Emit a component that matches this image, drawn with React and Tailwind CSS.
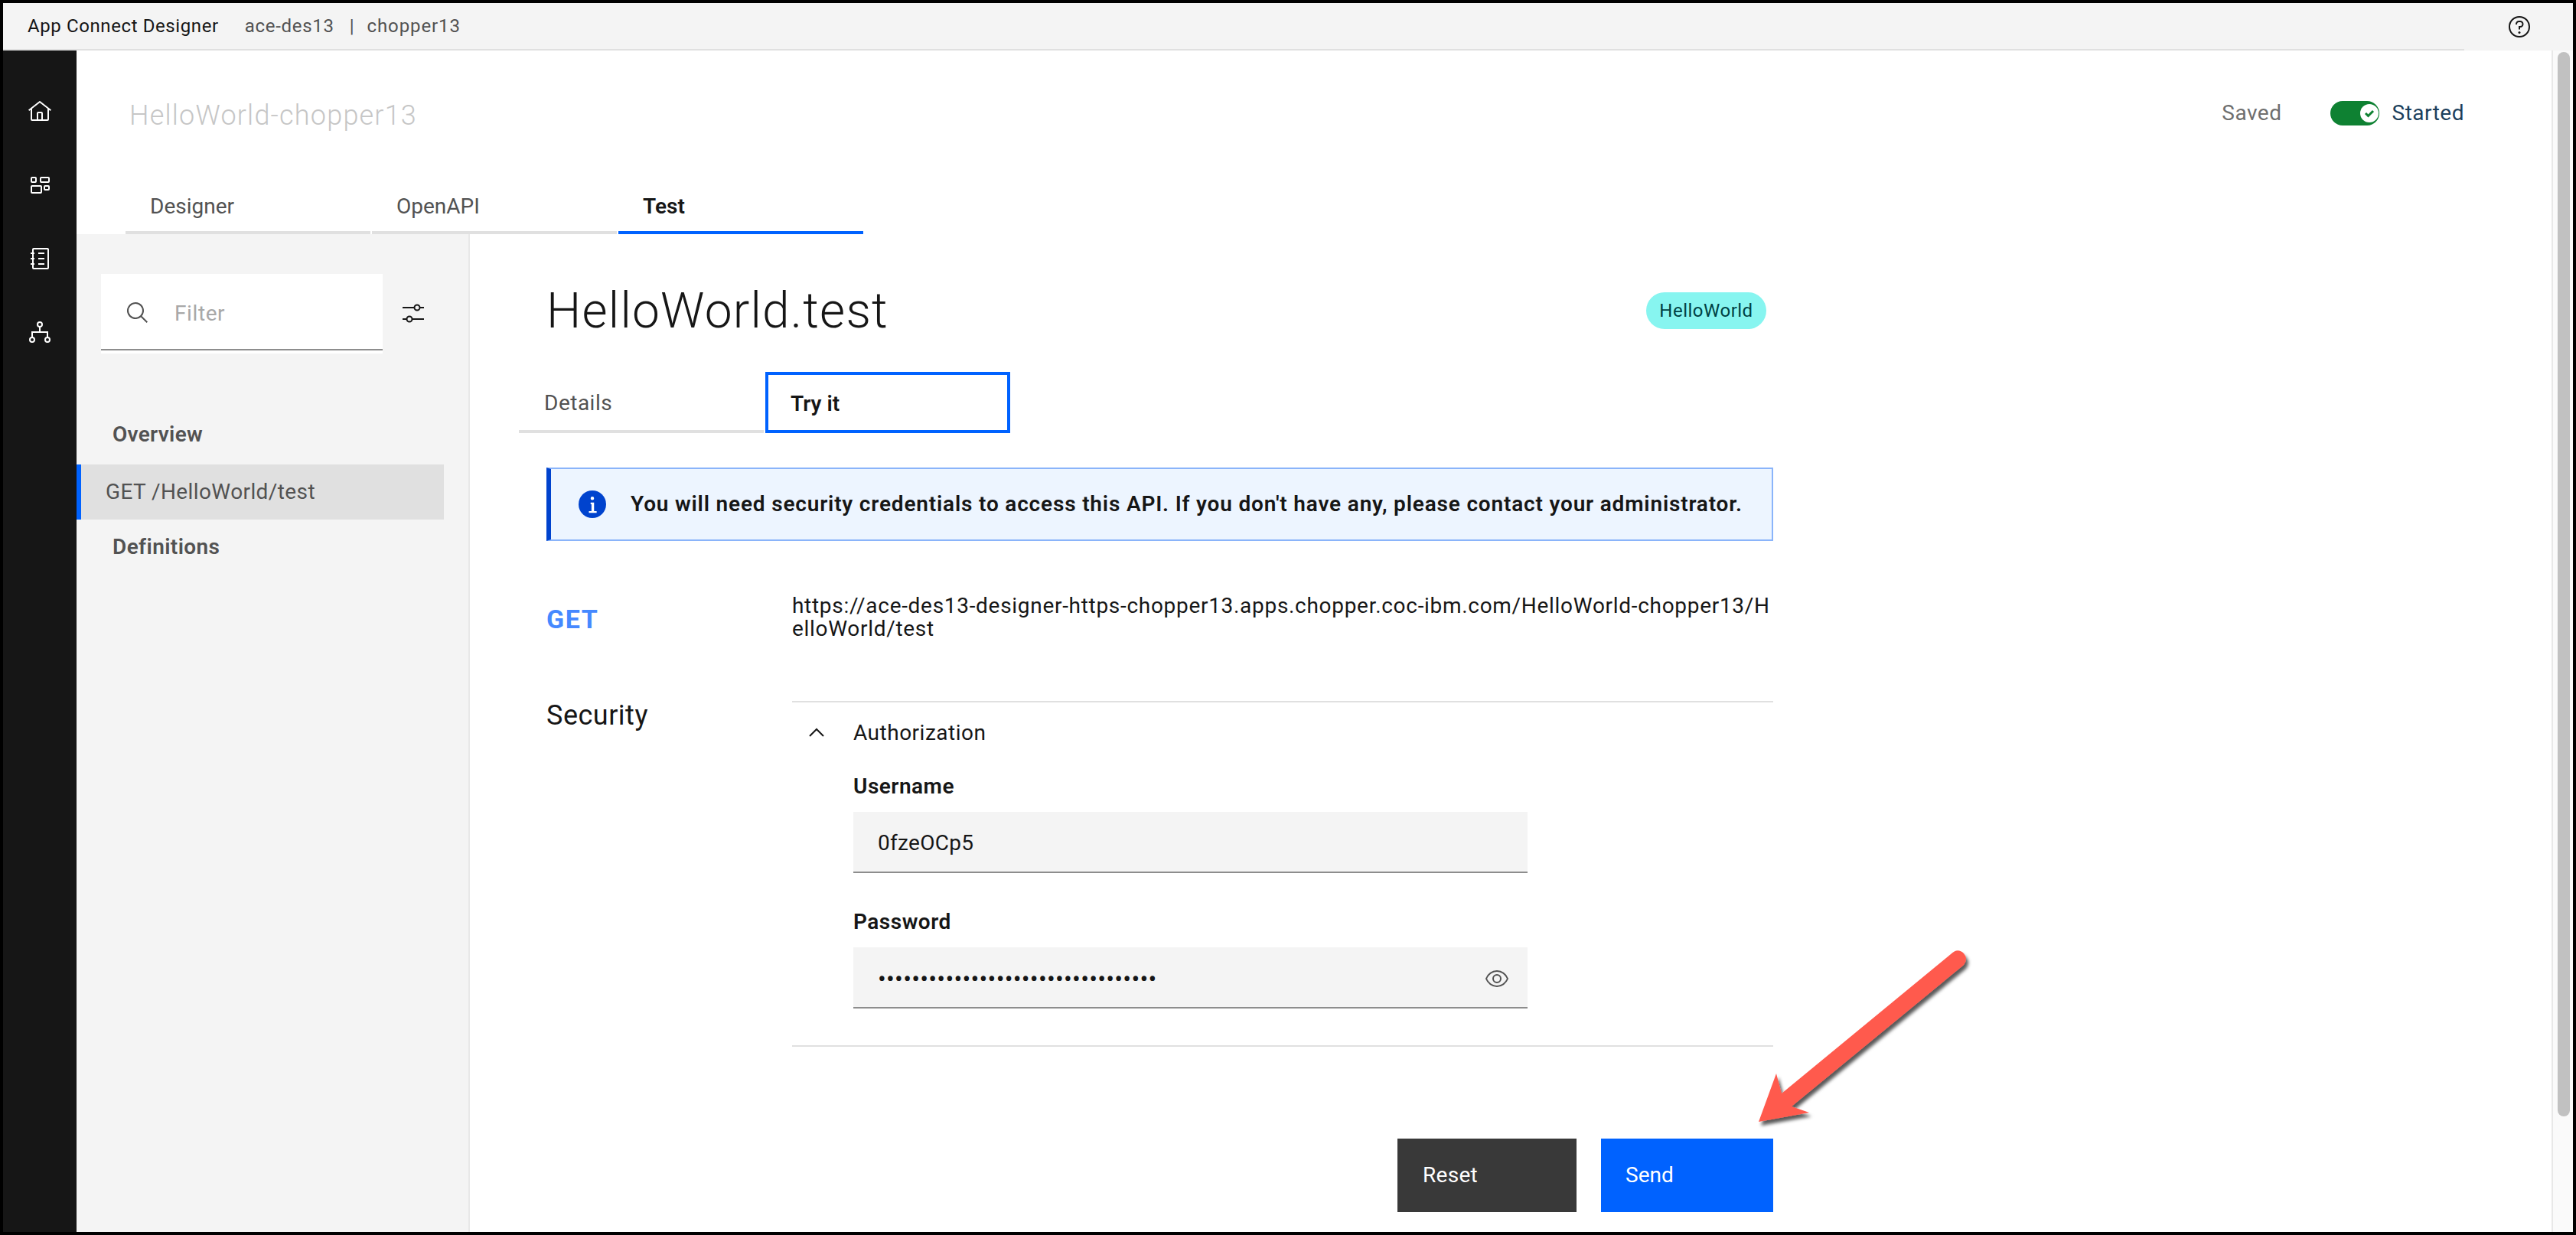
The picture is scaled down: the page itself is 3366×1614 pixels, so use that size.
const plex = { fontFamily: 'Roboto, "Noto Sans", sans-serif' };

function Arrow() {
  return (
    <svg className="absolute left-[2290px] top-[1236px] overflow-visible" width="290" height="240" viewBox="2290 1236 290 240">
      <defs>
        <filter id="arrowShadow" x="-10%" y="-10%" width="130%" height="130%">
          <feDropShadow dx="3" dy="5" stdDeviation="2" floodColor="#000" floodOpacity="0.65" />
        </filter>
      </defs>
      <path
        filter="url(#arrowShadow)"
        fill="#ff5a4d"
        d="M2298 1466 L2321 1403 L2328 1429 L2549 1247 Q2558 1238 2566 1246 Q2572 1253 2566 1261 L2341 1446 L2364 1454 Z"
      />
    </svg>
  );
}

function NavIcons() {
  return (
    <div className="flex flex-col items-center pt-[64px] text-white">
      <svg width="32" height="32" viewBox="0 0 32 32" fill="currentColor">
        <path d="M16.6123,2.2138a1.01,1.01,0,0,0-1.2427,0L1,13.4194l1.2427,1.5717L4,13.6209V26a2.0041,2.0041,0,0,0,2,2H26a2.0037,2.0037,0,0,0,2-2V13.63L29.7573,15,31,13.4282ZM18,26H14V18h4Zm2,0V18a2.0023,2.0023,0,0,0-2-2H14a2.0023,2.0023,0,0,0-2,2v8H6V12.0615l10-7.79,10,7.8005V26Z" />
      </svg>
      <svg className="mt-[69px]" width="25" height="22" viewBox="0 0 25 22" fill="none" stroke="currentColor" strokeWidth="2">
        <rect x="1" y="1" width="6" height="6" rx="1" />
        <rect x="13" y="1" width="11" height="6" rx="1" />
        <rect x="1" y="12" width="13" height="9" rx="1" />
        <rect x="18" y="12" width="6" height="5" rx="1" />
      </svg>
      <svg className="mt-[71px]" width="24" height="28" viewBox="0 0 24 28" fill="none" stroke="currentColor" strokeWidth="2">
        <rect x="3" y="1" width="20" height="26" rx="1" />
        <path d="M0 7h5M0 14h5M0 21h5M10 7h8M10 14h8M10 21h8" />
      </svg>
      <svg className="mt-[68px]" width="28" height="29" viewBox="0 0 28 29" fill="none" stroke="currentColor" strokeWidth="2">
        <circle cx="14" cy="4" r="3" />
        <circle cx="4" cy="24" r="3" />
        <circle cx="24" cy="24" r="3" />
        <path d="M14 7v7M4 21v-7h20v7" />
      </svg>
    </div>
  );
}

function TopTab({ label, active }) {
  return (
    <div
      className={`w-[320px] h-[68px] pl-[32px] pt-[14px] text-[28px] leading-[36px] border-b-4 ${
        active ? 'border-[#0062ff] text-[#161616] font-semibold' : 'border-[#e0e0e0] text-[#525252]'
      }`}
    >
      {label}
    </div>
  );
}

function FilterPanel() {
  return (
    <div className="w-[514px] shrink-0 bg-[#f4f4f4] border-r-2 border-[#e8e8e8] pt-[52px]">
      <div className="flex items-start">
        <div className="ml-[32px] w-[368px] h-[104px] bg-white">
          <div className="h-[100px] border-b-2 border-[#8d8d8d] flex items-center pt-[4px]">
            <svg className="ml-[32px]" width="32" height="32" viewBox="0 0 32 32" fill="#525252">
              <path d="M29,27.5859l-7.5521-7.5521a11.0177,11.0177,0,1,0-1.4141,1.4141L27.5859,29ZM4,13a9,9,0,1,1,9,9A9.01,9.01,0,0,1,4,13Z" />
            </svg>
            <span className="ml-[32px] mt-[2px] text-[28px] text-[#a8a8a8] tracking-[0.6px]">Filter</span>
          </div>
        </div>
        <svg className="ml-[26px] mt-[39px]" width="28" height="25" viewBox="0 0 28 25" fill="none" stroke="#161616" strokeWidth="2">
          <path d="M0 5h15.5M22.5 5h5.5M0 20h5.5M12.5 20h15.5" />
          <circle cx="19" cy="5" r="3.5" />
          <circle cx="9" cy="20" r="3.5" />
        </svg>
      </div>
      <div className="mt-[88px] pl-[47px] text-[28px] leading-[36px] font-semibold text-[#525252] tracking-[0.3px]">Overview</div>
      <div className="mt-[21px] w-[480px] h-[72px] bg-[#e0e0e0] border-l-[6px] border-[#0062ff] pl-[32px] flex items-center text-[28px] text-[#525252] tracking-[0.4px]">
        GET /HelloWorld/test
      </div>
      <div className="mt-[18px] pl-[47px] text-[28px] leading-[36px] font-semibold text-[#525252] tracking-[0.4px]">Definitions</div>
    </div>
  );
}

function Field({ label, children }) {
  return (
    <div>
      <div className="text-[28px] leading-[36px] font-semibold text-[#161616] tracking-[0.5px]">{label}</div>
      <div className="mt-[15px] w-[881px] h-[80px] bg-[#f4f4f4] border-b-2 border-[#8d8d8d] pl-[32px] pr-[24px] pt-[3px] flex items-center justify-between text-[28px] text-[#161616] tracking-[0.3px]">
        {children}
      </div>
    </div>
  );
}

export default function App() {
  return (
    <div style={plex} className="relative w-[3366px] h-[1614px] bg-black p-[4px] overflow-hidden">
      <div className="flex flex-col w-full h-[1606px] bg-white">
        <header className="h-[62px] shrink-0 bg-[#f4f4f4] flex">
          <div className="flex-1 flex items-center pl-[32px] text-[24px] border-b-2 border-[#e0e0e0]">
            <span className="text-[#161616] tracking-[0.6px]">App Connect Designer</span>
            <span className="ml-[34px] text-[#525252] tracking-[0.7px]">ace-des13</span>
            <span className="ml-[20px] text-[#525252]">|</span>
            <span className="ml-[17px] text-[#525252] tracking-[0.9px]">chopper13</span>
          </div>
          <div className="w-[142px] flex items-center pl-[56px]">
            <svg width="32" height="32" viewBox="0 0 32 32" fill="#161616">
              <path d="M16,2A14,14,0,1,0,30,16,14,14,0,0,0,16,2Zm0,26A12,12,0,1,1,28,16,12,12,0,0,1,16,28Z" />
              <circle cx="16" cy="23.5" r="1.5" />
              <path d="M17,8H15.5A4.49,4.49,0,0,0,11,12.5V13h2v-.5A2.5,2.5,0,0,1,15.5,10H17a2.5,2.5,0,0,1,0,5H15v4.5h2V17a4.5,4.5,0,0,0,0-9Z" />
            </svg>
          </div>
        </header>

        <div className="flex-1 flex min-h-0">
          <nav className="w-[96px] shrink-0 bg-[#161616]">
            <NavIcons />
          </nav>

          <div className="flex-1 flex flex-col min-w-0 border-r-2 border-[#e8e8e8]">
            <div className="h-[240px] shrink-0 relative">
              <div className="flex items-start justify-between pl-[69px] pr-[114px] pt-[63px]">
                <span className="text-[36px] leading-[44px] text-[#c6c6c6] font-light tracking-[1.2px]">HelloWorld-chopper13</span>
                <div className="flex items-center text-[28px] leading-[36px] mt-[1px]">
                  <span className="text-[#6f6f6f] tracking-[0.5px]">Saved</span>
                  <span className="ml-[63px] w-[64px] h-[32px] rounded-full bg-[#0e8132] relative">
                    <span className="absolute right-[0px] top-[4px] w-[24px] h-[24px] rounded-full bg-white flex items-center justify-center mr-[1px]">
                      <svg width="16" height="16" viewBox="0 0 16 16" fill="none" stroke="#0e8132" strokeWidth="3">
                        <path d="M3 8l3.5 3.5L13 5" />
                      </svg>
                    </span>
                  </span>
                  <span className="ml-[17px] text-[#1c3f5c] tracking-[0.5px]">Started</span>
                </div>
              </div>
              <div className="absolute left-[64px] bottom-0 flex gap-[2px]">
                <TopTab label="Designer" />
                <TopTab label="OpenAPI" />
                <TopTab label="Test" active />
              </div>
            </div>

            <div className="flex-1 flex min-h-0">
              <FilterPanel />

              <main className="flex-1 min-w-0">
                <div className="w-[1703px]">
                  <div className="pl-[100px] pr-[9px] pt-[64px] flex items-center justify-between h-[136px]">
                    <h1 className="mt-[2px] text-[64px] leading-[72px] font-light text-[#161616] tracking-[1.2px]">HelloWorld.test</h1>
                    <span className="h-[48px] w-[157px] justify-center rounded-full bg-[#87f5f0] flex items-center text-[24px] text-[#004144] tracking-[0.5px]">HelloWorld</span>
                  </div>
                </div>
                <div className="ml-[64px] flex gap-[2px] mt-[44px]">
                  <div className="w-[320px] h-[80px] border-b-4 border-[#e0e0e0] pl-[33px] pt-[6px] flex items-center text-[28px] text-[#525252] tracking-[0.5px]">Details</div>
                  <div className="w-[320px] h-[80px] border-4 border-[#0062ff] pl-[29px] pt-[4px] flex items-center text-[28px] font-semibold text-[#161616]">Try it</div>
                </div>

                <div className="ml-[100px] mt-[45px] w-[1603px] h-[96px] bg-[#edf5ff] border-2 border-l-[6px] border-[#8ab4fa] border-l-[#0043ce] flex items-center pl-[36px]">
                  <svg width="36" height="36" viewBox="0 0 32 32">
                    <circle cx="16" cy="16" r="16" fill="#0043ce" />
                    <path fill="#fff" d="M14 14h4v10h3v2h-9v-2h3v-8h-1zM16 7a2 2 0 1 1 0 4a2 2 0 1 1 0-4z" />
                  </svg>
                  <span className="ml-[32px] text-[28px] font-semibold text-[#161616] tracking-[0.82px] whitespace-nowrap">
                    You will need security credentials to access this API. If you don't have any, please contact your administrator.
                  </span>
                </div>

                <div className="ml-[99px] mt-[70px] flex w-[1604px]">
                  <div className="w-[322px] pt-[12px] pl-[1px] text-[34px] leading-[40px] font-bold text-[#4589ff] tracking-[1.5px]">GET</div>
                  <div className="flex-1 text-[28px] leading-[30px] text-[#161616] tracking-[0.7px] whitespace-nowrap">
                    https://ace-des13-designer-https-chopper13.apps.chopper.coc-ibm.com/HelloWorld-chopper13/H<br />elloWorld/test
                  </div>
                </div>

                <div className="ml-[99px] mt-[79px] flex w-[1604px]">
                  <div className="w-[322px] pl-[1px] text-[36px] leading-[38px] text-[#161616] tracking-[0.5px]">Security</div>
                  <div className="flex-1 border-y-2 border-[#e0e0e0] h-[452px]">
                    <div className="h-[80px] flex items-center">
                      <svg className="ml-[20px]" width="24" height="24" viewBox="0 0 24 24" fill="none" stroke="#161616" strokeWidth="2">
                        <path d="M3 16l9-9 9 9" />
                      </svg>
                      <span className="ml-[36px] text-[28px] text-[#161616] tracking-[0.5px]">Authorization</span>
                    </div>
                    <div className="ml-[80px] flex flex-col gap-[46px] pt-[12px]">
                      <Field label="Username">0fzeOCp5</Field>
                      <Field label="Password">
                        <span className="text-[32px] tracking-[0.25px]">•••••••••••••••••••••••••••••••••</span>
                        <svg width="32" height="32" viewBox="0 0 32 32" fill="#525252">
                          <path d="M30.94,15.66A16.69,16.69,0,0,0,16,5,16.69,16.69,0,0,0,1.06,15.66a1,1,0,0,0,0,.68A16.69,16.69,0,0,0,16,27,16.69,16.69,0,0,0,30.94,16.34,1,1,0,0,0,30.94,15.66ZM16,25c-5.3,0-10.9-3.93-12.93-9C5.1,10.93,10.7,7,16,7s10.9,3.93,12.93,9C26.9,21.07,21.3,25,16,25Z" />
                          <path d="M16,10a6,6,0,1,0,6,6A6,6,0,0,0,16,10Zm0,10a4,4,0,1,1,4-4A4,4,0,0,1,16,20Z" />
                        </svg>
                      </Field>
                    </div>
                  </div>
                </div>

                <div className="w-[1703px] flex justify-end gap-[32px] mt-[120px]">
                  <button className="w-[234px] h-[96px] bg-[#393939] text-white text-[28px] text-left pl-[33px] tracking-[0.3px]">Reset</button>
                  <button className="w-[225px] h-[96px] bg-[#0062ff] text-white text-[28px] text-left pl-[32px]">Send</button>
                </div>
              </main>
            </div>
          </div>

          <div className="w-[26px] shrink-0 bg-[#fafafa] pl-[6px] pr-[4px]">
            <div className="h-[1391px] mt-[2px] rounded-full bg-[#c1c1c1]" />
          </div>
        </div>
      </div>
      <Arrow />
    </div>
  );
}
